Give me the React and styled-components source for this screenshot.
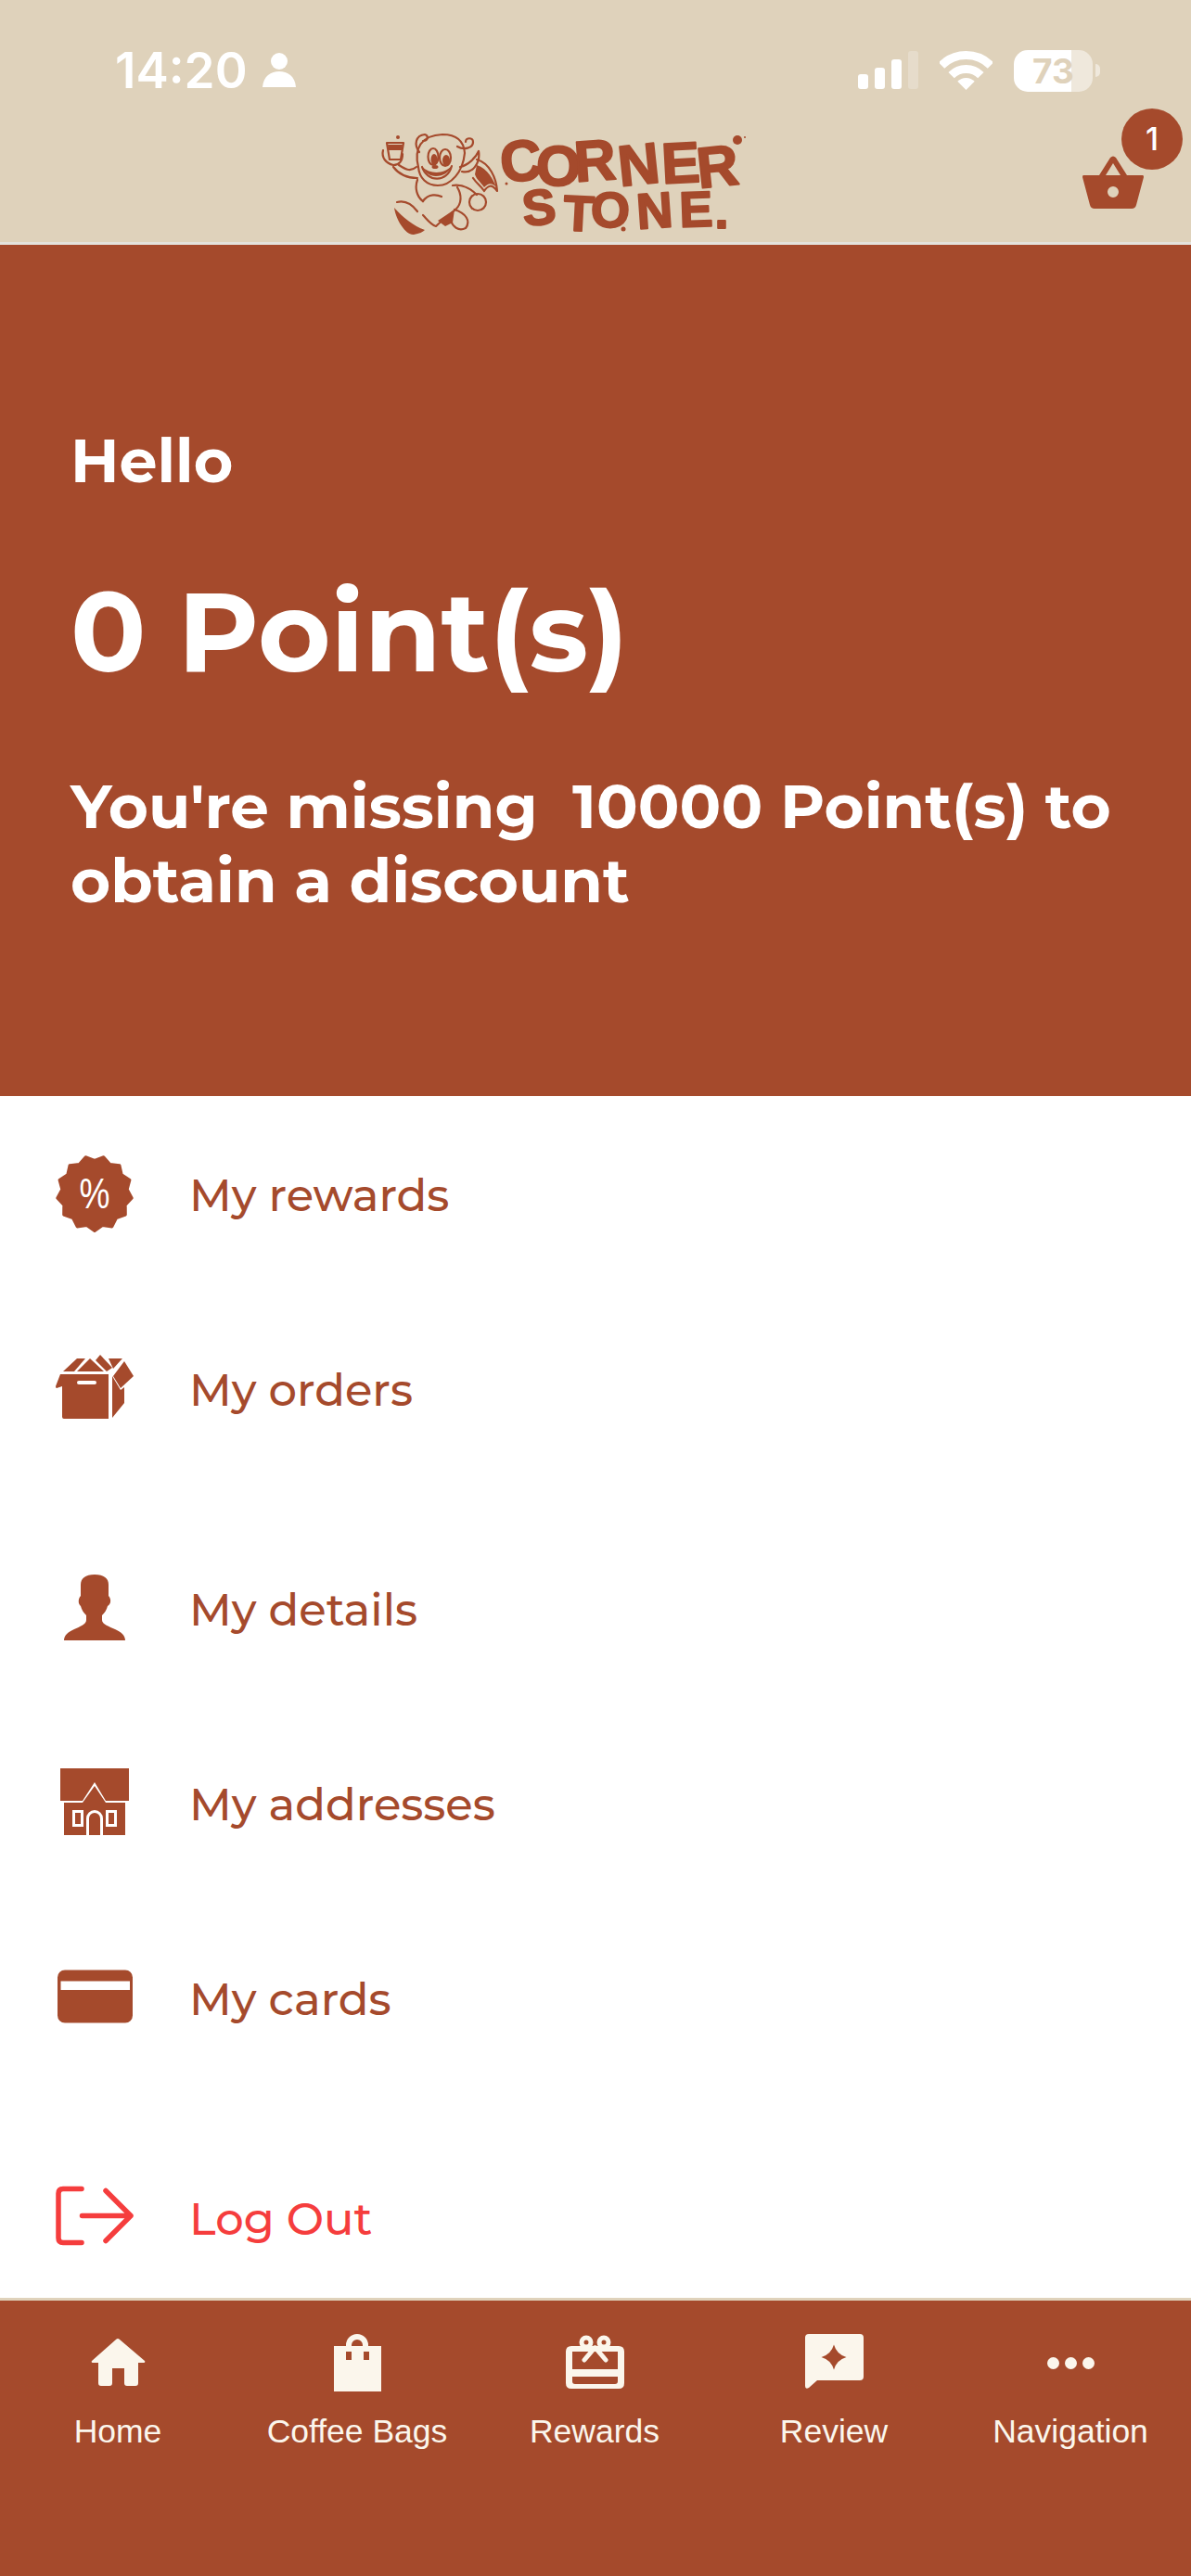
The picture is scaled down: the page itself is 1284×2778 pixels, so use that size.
import React from 'react';
import styled, { createGlobalStyle } from 'styled-components';

const RUST = '#a54a2c';
const CREAM = '#dfd2bb';
const RED = '#f53d3d';
const PALE = '#fbf6ec';

const GlobalStyle = createGlobalStyle`
  html, body { margin: 0; padding: 0; background: #fff; }
  * { box-sizing: border-box; }
`;

const Page = styled.div`
  width: 1284px;
  height: 2778px;
  display: flex;
  flex-direction: column;
  background: #fff;
  font-family: "Montserrat", "Inter", "Noto Sans", sans-serif;
  overflow: hidden;
`;

const Header = styled.header`
  height: 264px;
  flex: none;
  background: ${CREAM};
  border-bottom: 3px solid #e4e2dc;
  display: flex;
  flex-direction: column;
`;

const StatusBar = styled.div`
  height: 120px;
  flex: none;
  padding: 46px 98px 0 124px;
  display: flex;
  justify-content: space-between;
  align-items: flex-start;
  color: #fff;
`;

const StatusLeft = styled.div`
  display: flex;
  align-items: center;
  gap: 16px;
  font: 600 53px/60px "Inter", sans-serif;
`;

const StatusRight = styled.div`
  display: flex;
  align-items: center;
  gap: 23px;
  height: 60px;
`;

const BatteryWrap = styled.div`
  display: flex;
  align-items: center;
  gap: 3px;
`;

const Battery = styled.div`
  width: 85px;
  height: 45px;
  border-radius: 15px;
  background: linear-gradient(to right, #fff 62px, #efe8dc 62px);
  color: ${CREAM};
  font: 700 37px/45px "Inter", sans-serif;
  text-align: center;
`;

const BatteryNub = styled.span`
  width: 5px;
  height: 14px;
  border-radius: 0 7px 7px 0;
  background: #efe8dc;
`;

const LogoRow = styled.div`
  flex: 1;
  display: flex;
  padding-left: 380px;
  position: relative;
`;

const Logo = styled.svg`
  width: 460px;
  height: 141px;
`;

const Lettering = styled.text`
  font-family: "Liberation Sans", sans-serif;
  font-weight: 700;
  font-size: ${(p) => p.$size}px;
  fill: ${RUST};
  stroke: ${RUST};
  stroke-width: 2px;
  stroke-linejoin: round;
  text-anchor: middle;
`;

const Basket = styled.div`
  position: absolute;
  right: 51px;
  top: 48px;
  width: 66px;
  height: 57px;
`;

const BasketIcon = styled.svg`
  display: block;
  width: 66px;
  height: 57px;
`;

const Badge = styled.span`
  position: absolute;
  right: -42px;
  top: -51px;
  width: 66px;
  height: 66px;
  border-radius: 50%;
  background: ${RUST};
  color: #fff;
  font: 500 34px/66px "Inter", sans-serif;
  text-align: center;
`;

const Hero = styled.section`
  height: 918px;
  flex: none;
  background: ${RUST};
  color: #fff;
  padding: 0 76px;
`;

const Hello = styled.h2`
  margin: 0;
  padding-top: 196px;
  font-size: 65px;
  line-height: 74px;
  font-weight: 700;
`;

const Points = styled.h1`
  margin: 0;
  padding-top: 77px;
  font-size: 120px;
  line-height: 140px;
  font-weight: 700;
`;

const Missing = styled.p`
  margin: 0;
  padding-top: 79px;
  font-size: 66px;
  line-height: 80px;
  font-weight: 700;
  white-space: pre-wrap;
`;

const Menu = styled.nav`
  flex: 1;
  display: flex;
  flex-direction: column;
  padding-top: 35px;
`;

const Row = styled.a`
  height: 140px;
  flex: none;
  display: flex;
  align-items: center;
  margin-top: ${(p) => p.$gap || 0}px;
  padding-left: 60px;
  color: ${(p) => (p.$danger ? RED : RUST)};
  font-size: 48px;
  font-weight: 500;
`;

const RowLabel = styled.span`
  margin-top: 3px;
`;

const RowIcon = styled.svg`
  width: 84px;
  height: 84px;
  flex: none;
  margin-right: 60px;
`;

const TabBar = styled.footer`
  height: 300px;
  flex: none;
  background: ${RUST};
  border-top: 3px solid ${CREAM};
  display: grid;
  grid-template-columns: 254px 262px 250px 266px 244px;
  padding-top: 32px;
  align-items: start;
`;

const Tab = styled.div`
  display: flex;
  flex-direction: column;
  align-items: center;
  color: ${PALE};
  font: 400 35.5px/42px "Liberation Sans", sans-serif;
  white-space: nowrap;
`;

const TabIcon = styled.svg`
  width: 72px;
  height: 72px;
  margin-bottom: 16px;
  fill: ${PALE};
`;

const BadgePct = () => {
  const pts = [];
  const n = 13;
  for (let i = 0; i < n * 2; i++) {
    const r = i % 2 ? 35.5 : 40.5;
    const a = Math.PI + (Math.PI * i) / n;
    pts.push(`${(42 + r * Math.sin(a)).toFixed(1)},${(42 - r * Math.cos(a)).toFixed(1)}`);
  }
  return (
    <RowIcon viewBox="0 0 84 84">
      <polygon points={pts.join(' ')} fill={RUST} stroke={RUST} strokeWidth="3" strokeLinejoin="round" />
      <text x="42" y="58" textAnchor="middle" fill="#fff" fontSize="47" textLength="33" lengthAdjust="spacingAndGlyphs" fontFamily="Liberation Sans, sans-serif">%</text>
    </RowIcon>
  );
};

const BoxIcon = () => (
  <RowIcon viewBox="0 0 84 84">
    <g fill={RUST}>
      <path d="M5 27 H57 V75 H9 Q7 75 7 73 V40 L1 42 Q0 42 0 40 Z" />
      <path d="M61 29 L70 44 L74 41 V58 L61 74 Z" />
      <path d="M62 29 L74 13 L84 29 L70 42 Z" />
      <path d="M8 24 L23 10 H32 L20 24 Z" />
      <path d="M23 24 L37 10 L52 24 Z" />
      <path d="M43 12 L48 6 L61 20 L55 24 Z" />
      <path d="M57 10 H72 L62 21 Z" />
    </g>
    <rect x="23" y="34" width="21" height="4" rx="2" fill="#fff" />
  </RowIcon>
);

const PersonIcon = () => (
  <RowIcon viewBox="0 0 84 84">
    <path
      fill={RUST}
      d="M42 6 C52 6 57 10 57 17 V29 C60 32 60 38 56 40 C55 44 53 47 50 50 V55 C50 60 58 62 64 65 C71 68 75 72 75 77 H9 C9 72 13 68 20 65 C26 62 33 60 33 55 V50 C30 47 28 44 27 40 C24 38 24 32 27 29 V17 C27 10 32 6 42 6 Z"
    />
  </RowIcon>
);

const HouseIcon = () => (
  <RowIcon viewBox="0 0 84 84">
    <path fill={RUST} d="M5 5 H79 V40 H54 L42 20 L29 40 H5 Z" />
    <path
      fill={RUST}
      fillRule="evenodd"
      d="M9 42 H29 L42 24 L54 42 H75 V77 H9 Z M18 50 V68 H30 V50 Z M54 50 V68 H66 V50 Z M33 77 H51 V59 A9 9 0 0 0 33 59 Z"
    />
    <path fill={RUST} d="M21 53 H27 V65 H21 Z M57 53 H63 V65 H57 Z M36 77 V59 A6 6 0 0 1 48 59 V77 Z" />
  </RowIcon>
);

const CardIcon = () => (
  <RowIcon viewBox="0 0 84 84">
    <path
      fill={RUST}
      fillRule="evenodd"
      d="M10 12.5 H75 A8 8 0 0 1 83 20.5 V61.5 A8 8 0 0 1 75 69.5 H10 A8 8 0 0 1 2 61.5 V20.5 A8 8 0 0 1 10 12.5 Z M5.5 24.5 V34 H80 V24.5 Z"
    />
  </RowIcon>
);

const LogoutIcon = () => (
  <RowIcon viewBox="0 0 84 84" fill="none" stroke={RED} strokeWidth="5.5" strokeLinecap="round" strokeLinejoin="round">
    <path d="M28 11.5 H8 Q3 11.5 3 16.5 V64.5 Q3 69.5 8 69.5 H28" />
    <path d="M28.5 40.5 H81 M54 13.5 L81 40.5 L54 67.5" />
  </RowIcon>
);

const CornerLogo = () => (
  <Logo viewBox="0 0 460 141">
    {/* devil mascot */}
    <g fill="none" stroke={RUST} strokeWidth="2.2" strokeLinecap="round" strokeLinejoin="round">
      <path d="M71 60 C66 40 74 26 97 25 C112 25 120 32 121 45 C119 66 106 80 92 80 C80 80 72 72 71 60 Z" />
      <path d="M72 44 C66 36 68 26 78 25 C82 26 82 32 76 32" />
      <path d="M113 38 C120 42 130 40 130 33 C130 28 122 28 122 33" />
      <path d="M116 60 C125 58 133 50 136 43 C138 55 130 68 118 65" />
      <path d="M69 60 C62 66 56 62 50 58 M70 72 C60 72 50 68 44 60" />
      <path d="M37 34 H55 L52 52 H40 Z M33 42 C31 50 36 56 44 58 C50 58 54 54 54 46" />
      <path d="M70 74 C67 82 69 92 76 97 M108 80 C120 78 130 86 134 90" />
      <path d="M113 82 C118 90 118 100 111 106 C104 112 96 118 90 124 C84 122 80 116 76 112" />
      <path d="M48 98 C56 96 64 100 70 108 M76 97 C82 88 92 90 96 92" />
      <circle cx="135" cy="98" r="9" />
      <path d="M110 106 C122 110 128 118 122 126 C114 130 108 124 106 118" />
      <path d="M134 52 C148 56 155 72 156 86 C150 78 146 80 142 86 C138 80 134 78 130 72" />
      <ellipse cx="87" cy="49" rx="5.5" ry="9" />
      <ellipse cx="100" cy="50" rx="6" ry="9" />
      <path d="M75 60 C80 76 102 78 107 59" />
    </g>
    <g fill={RUST}>
      <ellipse cx="88" cy="52" rx="3.5" ry="6" />
      <ellipse cx="101" cy="53" rx="4" ry="6" />
      <ellipse cx="89" cy="60" rx="3.5" ry="2" />
      <path d="M75 60 C84 68 98 68 107 59 C104 66 98 70 90 70 C83 70 78 66 75 60 Z" />
      <path d="M38 36 H54 L53 42 H39 Z" />
      <circle cx="49" cy="28" r="2" />
      <path d="M45 104 C47 118 58 134 66 133 C72 132 76 130 78 128 C66 124 54 114 45 104 Z" />
      <path d="M134 58 C146 62 152 74 155 82 C150 76 146 78 142 82 C138 76 134 74 132 68 Z" />
      <path d="M92 118 L110 106 L108 120 L100 124 Z" />
      <circle cx="415" cy="31" r="5" />
      <circle cx="423" cy="28" r="1" />
      <circle cx="292" cy="127" r="2.5" />
      <circle cx="166" cy="78" r="1.5" />
    </g>
    <Lettering $size={62} x="184 222 263 311 355 396" y="77 80 76 81 78 83" rotate="-6 0 -4 -6 -3 -6">CORNER</Lettering>
    <Lettering $size={54} x="203 243 278 327 371 398" y="124 128 125 127 125 126" rotate="-6 3 0 -4 -2 0">STONE.</Lettering>
  </Logo>
);

const rows = [
  { label: 'My rewards', Icon: BadgePct },
  { label: 'My orders', Icon: BoxIcon, gap: 70 },
  { label: 'My details', Icon: PersonIcon, gap: 97 },
  { label: 'My addresses', Icon: HouseIcon, gap: 70 },
  { label: 'My cards', Icon: CardIcon, gap: 70 },
  { label: 'Log Out', Icon: LogoutIcon, gap: 97, danger: true },
];

const App = () => (
  <Page>
    <GlobalStyle />
    <Header>
      <StatusBar>
        <StatusLeft>
          14:20
          <svg width="36" height="40" viewBox="0 0 36 40" fill="#fff">
            <circle cx="18" cy="10" r="9" />
            <path d="M0 38 C1 26 9 21 18 21 C27 21 35 26 36 38 Z" />
          </svg>
        </StatusLeft>
        <StatusRight>
          <svg width="65" height="42" viewBox="0 0 65 42">
            <rect x="0" y="25" width="11" height="16" rx="3" fill="#fff" />
            <rect x="18" y="18" width="11" height="23" rx="3" fill="#fff" />
            <rect x="36" y="9" width="11" height="32" rx="3" fill="#fff" />
            <rect x="54" y="0" width="11" height="41" rx="3" fill="#e6dccb" />
          </svg>
          <svg width="57" height="42" viewBox="0 0 57 42" fill="none" stroke="#fff" strokeWidth="9">
            <path d="M2 15.5 A37.5 37.5 0 0 1 55 15.5" />
            <path d="M12.6 26.1 A22.5 22.5 0 0 1 44.4 26.1" />
            <path d="M28.5 42 L19.3 32.8 A13 13 0 0 1 37.7 32.8 Z" fill="#fff" stroke="none" />
          </svg>
          <BatteryWrap>
            <Battery>73</Battery>
            <BatteryNub />
          </BatteryWrap>
        </StatusRight>
      </StatusBar>
      <LogoRow>
        <CornerLogo />
        <Basket>
          <BasketIcon viewBox="0 0 66 57">
            <path
              fill={RUST}
              fillRule="evenodd"
              d="M1 21 H18 L30 2 Q33 -1 36 2 L48 21 H65 Q66 21 66 23 L58 53 Q57 57 53 57 H13 Q9 57 8 53 L0 23 Q0 21 1 21 Z M25 21 H41 L33 8 Z M33 33 A6 6 0 1 0 33 45 A6 6 0 1 0 33 33 Z"
            />
          </BasketIcon>
          <Badge>1</Badge>
        </Basket>
      </LogoRow>
    </Header>
    <Hero>
      <Hello>Hello</Hello>
      <Points>0 Point(s)</Points>
      <Missing>{"You're missing  10000 Point(s) to obtain a discount"}</Missing>
    </Hero>
    <Menu>
      {rows.map(({ label, Icon, gap, danger }) => (
        <Row key={label} $gap={gap} $danger={danger}>
          <Icon />
          <RowLabel>{label}</RowLabel>
        </Row>
      ))}
    </Menu>
    <TabBar>
      <Tab>
        <TabIcon viewBox="0 0 72 72">
          <path d="M34 10 Q36 8 38 10 L65 33 Q66 35 64 35 H58 V57 Q58 60 55 60 H46 Q43 60 43 57 V41 H30 V57 Q30 60 27 60 H18 Q15 60 15 57 V35 H9 Q7 35 8 33 Z" />
        </TabIcon>
        Home
      </Tab>
      <Tab>
        <TabIcon viewBox="0 0 72 72">
          <path
            fillRule="evenodd"
            d="M11 17 H24 V16 A12 12 0 0 1 48 16 V17 H62 V66 H11 Z M30 17 H42 V16 A6 6 0 0 0 30 16 Z M24 23 V32 H30 V23 Z M43 23 V32 H49 V23 Z"
          />
        </TabIcon>
        Coffee Bags
      </Tab>
      <Tab>
        <TabIcon viewBox="0 0 72 72">
          <path
            fillRule="evenodd"
            d="M11 17 H62 Q68 17 68 23 V57 Q68 63 62 63 H11 Q5 63 5 57 V23 Q5 17 11 17 Z M12 23 V42 H61 V23 Z M12 50 V55 Q12 58 15 58 H58 Q61 58 61 55 V50 Z"
          />
          <circle cx="27" cy="13" r="5" fill="none" stroke={PALE} strokeWidth="5" />
          <circle cx="46" cy="13" r="5" fill="none" stroke={PALE} strokeWidth="5" />
          <path d="M36 19 L25 32 M37 19 L48 32" fill="none" stroke={PALE} strokeWidth="5" strokeLinecap="round" />
        </TabIcon>
        Rewards
      </Tab>
      <Tab>
        <TabIcon viewBox="0 0 72 72">
          <path
            fillRule="evenodd"
            d="M9 4 H64 Q68 4 68 8 V50 Q68 54 64 54 H18 L9 62 Q5 64 5 60 V8 Q5 4 9 4 Z M36 15.5 Q33 26 22.5 29 Q33 32 36 42.5 Q39 32 49.5 29 Q39 26 36 15.5 Z"
          />
        </TabIcon>
        Review
      </Tab>
      <Tab>
        <TabIcon viewBox="0 0 72 72">
          <circle cx="17.5" cy="35.5" r="6.5" />
          <circle cx="36.5" cy="35.5" r="6.5" />
          <circle cx="55.5" cy="35.5" r="6.5" />
        </TabIcon>
        Navigation
      </Tab>
    </TabBar>
  </Page>
);

export default App;
